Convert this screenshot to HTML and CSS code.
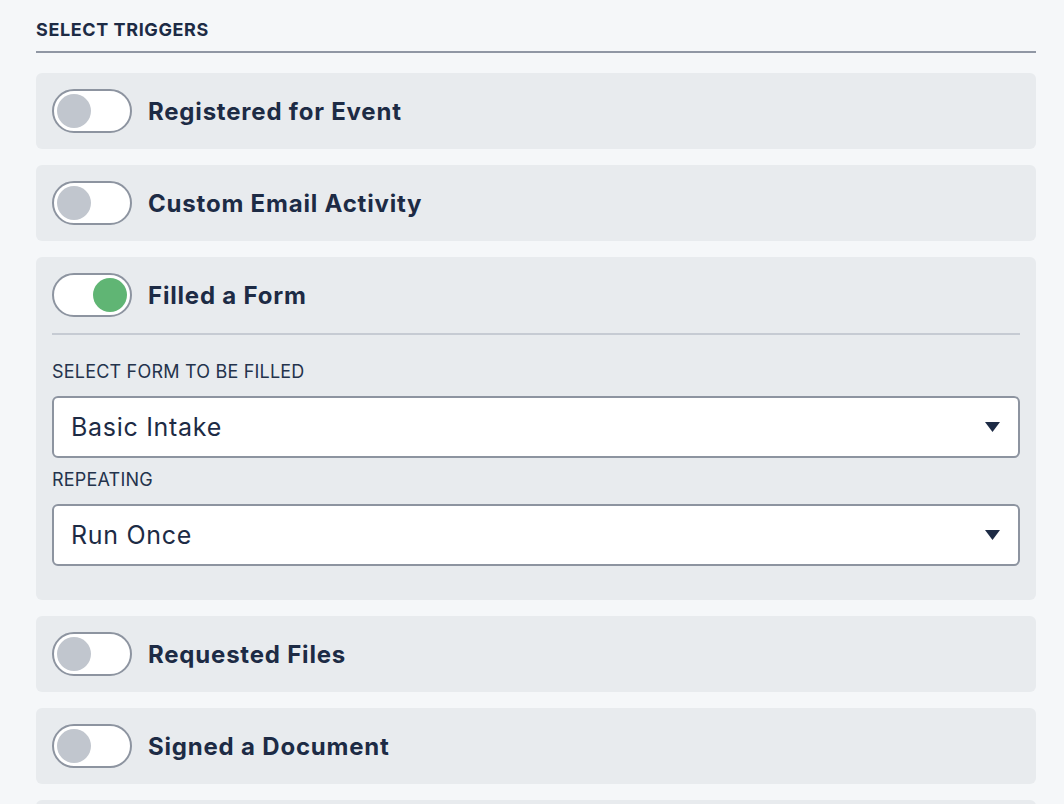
FILE: index.html
```html
<!DOCTYPE html>
<html lang="en">
<head>
<meta charset="utf-8">
<title>Select Triggers</title>
<link rel="stylesheet" href="styles.css">
</head>
<body>
<main class="panel">
  <h2 class="section-title">SELECT TRIGGERS</h2>

  <div class="card">
    <div class="row">
      <span class="toggle"><span class="knob"></span></span>
      <span class="label">Registered for Event</span>
    </div>
  </div>

  <div class="card">
    <div class="row">
      <span class="toggle"><span class="knob"></span></span>
      <span class="label">Custom Email Activity</span>
    </div>
  </div>

  <div class="card card-open">
    <div class="row">
      <span class="toggle on"><span class="knob"></span></span>
      <span class="label">Filled a Form</span>
    </div>
    <div class="divider"></div>
    <div class="fields">
      <div class="field-label">SELECT FORM TO BE FILLED</div>
      <div class="select">
        <span>Basic Intake</span>
        <svg class="caret" width="15" height="10" viewBox="0 0 15 10"><path d="M0 0H15L7.5 10Z" fill="#1d2b45"/></svg>
      </div>
      <div class="field-label second">REPEATING</div>
      <div class="select">
        <span>Run Once</span>
        <svg class="caret" width="15" height="10" viewBox="0 0 15 10"><path d="M0 0H15L7.5 10Z" fill="#1d2b45"/></svg>
      </div>
    </div>
  </div>

  <div class="card">
    <div class="row">
      <span class="toggle"><span class="knob"></span></span>
      <span class="label">Requested Files</span>
    </div>
  </div>

  <div class="card">
    <div class="row">
      <span class="toggle"><span class="knob"></span></span>
      <span class="label">Signed a Document</span>
    </div>
  </div>

  <div class="card">
    <div class="row">
      <span class="toggle"><span class="knob"></span></span>
    </div>
  </div>
</main>
</body>
</html>
```

FILE: styles.css
```css
html, body {
  margin: 0;
  padding: 0;
  background: #f5f7f9;
  height: 100%;
  overflow: hidden;
}

body {
  font-family: Inter, "Open Sans", sans-serif;
  color: #1d2b45;
}

.panel {
  width: 1000px;
  padding: 19px 0 0 36px;
}

.section-title {
  margin: 0 0 20px 0;
  font-size: 18px;
  line-height: 22px;
  font-weight: 700;
  letter-spacing: 0.6px;
  padding-bottom: 10px;
  border-bottom: 2px solid #9097a4;
}

.card {
  background: #e8ebee;
  border-radius: 6px;
  padding: 16px;
  margin-bottom: 16px;
}

.card-open {
  padding-bottom: 34px;
}

.row {
  display: flex;
  align-items: center;
  gap: 16px;
}

.toggle {
  box-sizing: border-box;
  width: 80px;
  height: 44px;
  border: 2px solid #8d94a0;
  border-radius: 22px;
  background: #ffffff;
  padding: 3px;
  display: flex;
  justify-content: flex-start;
  flex: none;
}

.toggle.on {
  justify-content: flex-end;
}

.knob {
  width: 34px;
  height: 34px;
  border-radius: 50%;
  background: #c1c6ce;
}

.toggle.on .knob {
  background: #60b574;
}

.label {
  font-size: 24px;
  font-weight: 700;
  line-height: 30px;
  letter-spacing: 0.8px;
  padding-top: 1px;
}

.divider {
  height: 2px;
  background: #c6cbd3;
  margin-top: 16px;
}

.field-label {
  font-size: 18px;
  line-height: 22px;
  letter-spacing: 0.2px;
  margin-top: 26px;
  margin-bottom: 13px;
  color: #24334c;
}

.field-label.second {
  margin-top: 11px;
}

.select {
  box-sizing: border-box;
  height: 62px;
  background: #ffffff;
  border: 2px solid #8d94a0;
  border-radius: 6px;
  display: flex;
  align-items: center;
  justify-content: space-between;
  padding: 0 18px 0 17px;
  font-size: 25px;
  letter-spacing: 0.7px;
}

.caret {
  display: block;
}
```
